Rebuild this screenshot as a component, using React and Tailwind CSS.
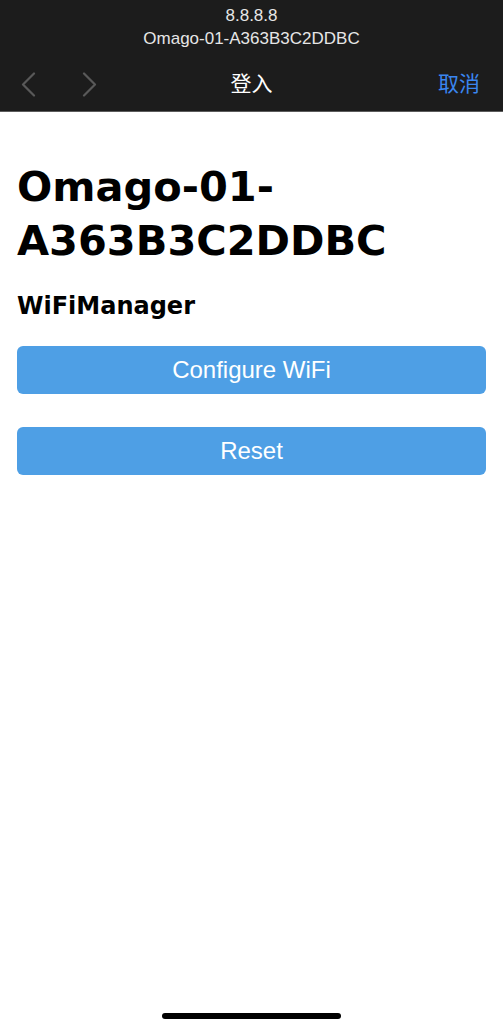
import React from "react";

const sans = { fontFamily: '"Liberation Sans", "Noto Sans CJK SC", sans-serif' };

const Header = () => {
  return (
    <header className="bg-[#1c1c1c] h-[112px] border-b border-[#5c5c5c] flex flex-col">
      <div className="flex flex-col items-center pt-[4px] text-[17px] leading-[23px] text-[#e6e6e6]">
        <span>8.8.8.8</span>
        <span>Omago-01-A363B3C2DDBC</span>
      </div>
      <div className="relative flex items-center justify-between px-[21px] mt-[21px] h-[26px]">
        <div className="flex items-center gap-[46px]">
          <svg width="15" height="25" viewBox="0 0 15 25" fill="none">
            <path d="M13 1.5 L2 12.5 L13 23.5" stroke="#595959" strokeWidth="2.2" strokeLinecap="round" strokeLinejoin="round" />
          </svg>
          <svg width="15" height="25" viewBox="0 0 15 25" fill="none">
            <path d="M2 1.5 L13 12.5 L2 23.5" stroke="#595959" strokeWidth="2.2" strokeLinecap="round" strokeLinejoin="round" />
          </svg>
        </div>
        <span className="absolute left-1/2 -translate-x-1/2 text-[21px] text-white">登入</span>
        <span className="text-[21px] text-[#3a86f0] mr-[2px]">取消</span>
      </div>
    </header>
  );
};

const App = () => {
  return (
    <div className="w-[503px] h-[1024px] bg-white flex flex-col" style={sans}>
      <Header />
      <main className="flex-1 flex flex-col px-[17px]">
        <h1
          className="mt-[48px] text-[41.5px] leading-[54px] font-bold text-black"
          style={{ fontFamily: '"DejaVu Sans", Verdana, sans-serif' }}
        >
          Omago-01-
          <br />
          A363B3C2DDBC
        </h1>
        <h3
          className="mt-[23px] text-[24px] leading-[30px] font-bold text-black"
          style={{ fontFamily: '"DejaVu Sans", Verdana, sans-serif' }}
        >
          WiFiManager
        </h3>
        <div className="mt-[25px] flex flex-col gap-[33px]">
          <button className="w-full h-[48px] rounded-[6px] bg-[#4e9fe5] text-white text-[24px]">
            Configure WiFi
          </button>
          <button className="w-full h-[48px] rounded-[6px] bg-[#4e9fe5] text-white text-[24px]">
            Reset
          </button>
        </div>
      </main>
      <div className="h-[24px] pt-[13px] flex justify-center">
        <div className="w-[179px] h-[6px] rounded-full bg-black" />
      </div>
    </div>
  );
};

export default App;
